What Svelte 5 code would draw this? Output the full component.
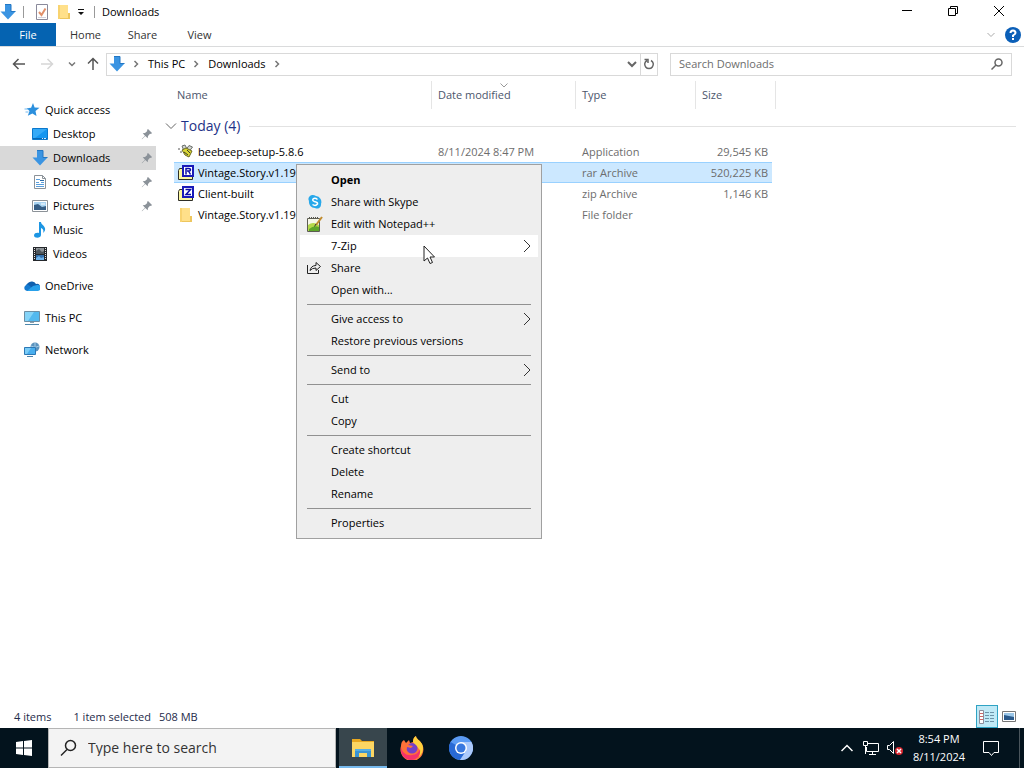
<script>
    const places = [
        { name: 'Desktop', icon: 'desktop', pinned: true },
        { name: 'Downloads', icon: 'down', pinned: true },
        { name: 'Documents', icon: 'document', pinned: true },
        { name: 'Pictures', icon: 'picture', pinned: true },
        { name: 'Music', icon: 'music' },
        { name: 'Videos', icon: 'video' }
    ];

    const roots = [
        { name: 'OneDrive', icon: 'onedrive' },
        { name: 'This PC', icon: 'pc' },
        { name: 'Network', icon: 'network' }
    ];

    const files = [
        { name: 'beebeep-setup-5.8.6', icon: 'bee', date: '8/11/2024 8:47 PM', type: 'Application', size: '29,545 KB' },
        { name: 'Vintage.Story.v1.19', icon: 'rar', date: '', type: 'rar Archive', size: '520,225 KB' },
        { name: 'Client-built', icon: 'zip', date: '', type: 'zip Archive', size: '1,146 KB' },
        { name: 'Vintage.Story.v1.19', icon: 'folder', date: '', type: 'File folder', size: '' }
    ];

    const menu = [
        [
            { label: 'Open', bold: true },
            { label: 'Share with Skype', icon: 'skype' },
            { label: 'Edit with Notepad++', icon: 'notepad' },
            { label: '7-Zip', sub: true },
            { label: 'Share', icon: 'share' },
            { label: 'Open with...' }
        ],
        [{ label: 'Give access to', sub: true }, { label: 'Restore previous versions' }],
        [{ label: 'Send to', sub: true }],
        [{ label: 'Cut' }, { label: 'Copy' }],
        [{ label: 'Create shortcut' }, { label: 'Delete' }, { label: 'Rename' }],
        [{ label: 'Properties' }]
    ];

    let place = $state('Downloads');
    let selected = $state(1);
    let hovered = $state('7-Zip');
    let query = $state('');
    let taskQuery = $state('');
</script>

{#snippet icon(name)}
    <svg class="icon" width="16" height="16" viewBox="0 0 16 16" fill="none" aria-hidden="true">
        {#if name === 'down'}
            <path d="M5 0.5h6v7h4.5L8 15.5 0.5 7.5H5z" fill="#3a94e2" />
            <path d="M5 0.5h6v7h4.5" stroke="#2277c4" />
        {:else if name === 'star'}
            <path d="M9 1l1.6 4.4 4.9.4-4 3.1 1 5.1-4.1-2.6-4.6 2.3 1.7-4.7-2.9-2.8 4.500-.5z" fill="#2b8fdd" />
            <path d="M0.5 7h4M1.5 10h3" stroke="#74b9ee" />
        {:else if name === 'desktop'}
            <path d="M0.5 2.5h15v11h-15z" fill="#1496f0" stroke="#0b78cc" />
            <path d="M1 12.5h14" stroke="#0768b5" />
            <path d="M10 12.5h1M12 12.5h2" stroke="#d5ecff" />
            <path d="M1 3h14L3 12H1z" fill="#35aaf7" />
        {:else if name === 'document'}
            <path d="M2.5 1.5h8l3 3v10h-11z" fill="#fff" stroke="#8b9299" />
            <path d="M10.5 1.5v3h3" stroke="#8b9299" />
            <path d="M4 5.5h4M4 8.5h3M9 8.5h3M4 10.5h8M4 12.5h8" stroke="#5b9fdc" />
            <path d="M8 6.5h4" stroke="#2c6ca8" />
        {:else if name === 'picture'}
            <path d="M0.5 2.5h15v11h-15z" fill="#fff" stroke="#8c9298" />
            <path d="M2 4h12v8H2z" fill="#a9d4f2" />
            <path d="M2 7l4-1 4 3 4-1v4H2z" fill="#365e86" />
            <path d="M9 6h4" stroke="#fff" />
        {:else if name === 'music'}
            <path d="M7 0h2c0 3 5 4 4 8 0 1-1 2-2 3 1-3 0-4-2-5v7c0 3.500-7 3.500-7 .5C2 11 5 10.500 7 11z" fill="#1d96e3" />
        {:else if name === 'video'}
            <path d="M1 1h14v14H1z" fill="#25282c" />
            <path d="M4 2h8v6H4z" fill="#8e9498" />
            <path d="M4 9h8v5H4z" fill="#326fac" />
            <path d="M4 5l3-2 3 3 2-1v3H4z" fill="#4d565c" />
            <path d="M4 12l3-2 2 2 3-1v3H4z" fill="#70b3ea" />
            <path d="M2.5 2v12M13.5 2v12" stroke="#e4e4e4" stroke-dasharray="1 1" />
        {:else if name === 'onedrive'}
            <path d="M4 12a4 4 0 0 1 0-7 5 5 0 0 1 8 1 3 3 0 0 1 2 6z" fill="#0f5fae" />
            <path d="M1 12a3.5 3.5 0 0 1 3-5.5l8 6.5H3z" fill="#1479cf" />
            <path d="M3 13l6-5 4-1a3 3 0 0 1 1 6z" fill="#28a0ea" />
        {:else if name === 'pc'}
            <path d="M0.5 1.5h15v10h-15z" fill="#53b9ef" stroke="#6d8ea3" />
            <path d="M1 2h9L4 11H1z" fill="#85d4f8" />
            <path d="M6 12.5h4" stroke="#8aa0ae" />
            <path d="M1 14.5h14" stroke="#4e87ac" />
        {:else if name === 'network'}
            <circle cx="11" cy="5" r="4.5" fill="#5c93bd" />
            <path d="M7 4q4 3 8 0M11 1v8" stroke="#a5cce7" />
            <path d="M0.5 5.5h11v7h-11z" fill="#48aeee" stroke="#2c78b5" />
            <path d="M1 6h6l-4 6H1z" fill="#7accf7" />
            <path d="M3 14.5h6" stroke="#4c82aa" />
        {:else if name === 'bee'}
            <path d="M4 2l3-1 2 4-3 2zM14.5 3L11 1.500 8.500 5l3 2z" fill="#d3d6d2" stroke="#6b706c" />
            <path d="M4 6l4-2 6 3-3 6-4-2z" fill="#d8d635" stroke="#6c6a22" />
            <path d="M6 8l4 3M9 6l3 3" stroke="#3b3b2b" />
            <path d="M0 5h2M2 8h2" stroke="#555" />
        {:else if name === 'rar' || name === 'zip'}
            <path d="M0.5 5.5l1-2h3l1 1h9v10h-14z" fill="#fbf7a0" stroke="#2e2e27" />
            <path d="M5 1h10v10H5z" fill="#fff" stroke="#1a1ab8" stroke-width="2" />
            {#if name === 'rar'}
                <path d="M8 9.5v-6h3q1.500 0 1.500 1.200T11 6H9M10.500 6l2 3.500" stroke="#0b0ba8" stroke-width="1.5" />
            {:else}
                <path d="M7.5 3.500h5L8 8.500h5" stroke="#0b0ba8" stroke-width="1.5" />
            {/if}
        {:else if name === 'folder'}
            <path d="M2 1h10v14H2z" fill="#ffe08a" />
            <path d="M12 9h2v6H3v-1h9z" fill="#edc65e" />
            <path d="M2 1h2v14H2z" fill="#f8d370" />
        {:else if name === 'properties'}
            <path d="M2.5 0.5h11v15h-11z" fill="#fff" stroke="#8a8a9b" />
            <path d="M5 8l2.5 3 4-6.5" stroke="#e0906a" stroke-width="2" />
            <path d="M4 13.5h8" stroke="#d2d2dc" />
        {:else if name === 'skype'}
            <path d="M5 1a6 6 0 0 1 4 1 6 6 0 0 1 5 8 4 4 0 0 1-6 4 6 6 0 0 1-6-7A4 4 0 0 1 5 1z" fill="#28a8ea" />
            <path d="M10.5 5.5Q8 3.500 6 5q-1 2 2 2.700t2.500 2.400q-2 2.400-5 .4" stroke="#fff" stroke-width="1.5" />
        {:else if name === 'notepad'}
            <path d="M0.5 2.5h12v13h-12z" fill="#f6f7e8" stroke="#5c5c52" />
            <path d="M1 9q5-4 11 0v6H1z" fill="#b4d84a" />
            <path d="M2 13q5-4 10-2v4H2z" fill="#5ea62a" />
            <path d="M2 1.5h10" stroke="#55554e" stroke-dasharray="1 1" />
            <path d="M15 1L9 9" stroke="#c08b2e" stroke-width="2" />
            <path d="M9 8l-1.500 2.500" stroke="#333" />
        {:else if name === 'share'}
            <path d="M0.5 5v8.5h11V10" stroke="#222" />
            <path d="M3 10.5q1-5 6-5v-3l4.5 4-4.5 4V8Q5 8 3 10.5z" stroke="#222" />
        {/if}
    </svg>
{/snippet}

{#snippet chevron(dir)}
    <svg class="icon" width="8" height="8" viewBox="0 0 8 8" fill="none" stroke="#777" stroke-width="1.5" aria-hidden="true">
        <path d={dir === 'down' ? 'M1 2.5l3 3 3-3' : 'M2.5 1l3 3-3 3'} />
    </svg>
{/snippet}

<div class="screen">
    <header class="titlebar">
        {@render icon('down')}
        <span class="divider"></span>
        <button class="quick" aria-label="Properties">{@render icon('properties')}</button>
        <button class="quick" aria-label="New folder">{@render icon('folder')}</button>
        <button class="quick-more" aria-label="Customize toolbar">
            <svg width="8" height="8" viewBox="0 0 8 8"><path d="M1 1h6v1H1zM1 4h6L4 7z" fill="#111" /></svg>
        </button>
        <span class="divider"></span>
        <h1>Downloads</h1>
        <div class="controls">
            <button aria-label="Minimize">
                <svg width="12" height="12" viewBox="0 0 12 12"><path d="M1 5.5h10" stroke="#000" /></svg>
            </button>
            <button aria-label="Restore">
                <svg width="12" height="12" viewBox="0 0 12 12" fill="none" stroke="#000"><path d="M1.5 3.5h7v7h-7zM3.5 3V1.5h7v7H9" /></svg>
            </button>
            <button aria-label="Close">
                <svg width="12" height="12" viewBox="0 0 12 12" stroke="#000"><path d="M1 1l10 10M11 1L1 11" /></svg>
            </button>
        </div>
    </header>

    <nav class="ribbon" aria-label="Ribbon">
        <button class="file">File</button>
        <button>Home</button>
        <button>Share</button>
        <button>View</button>
        <div class="ribbon-end">
            <button class="plain" aria-label="Expand ribbon">
                <svg class="icon" width="8" height="8" viewBox="0 0 8 8" fill="none" stroke="#aaa"><path d="M0.5 2L4 5.5 7.5 2" /></svg>
            </button>
            <button class="plain" aria-label="Help">
                <svg class="icon" width="16" height="16" viewBox="0 0 16 16" fill="none">
                    <circle cx="8" cy="8" r="8" fill="#0b5fb8" />
                    <path d="M5.5 6q0-2.500 2.500-2.500T10.500 6q0 1-2.500 2.500V10" stroke="#fff" stroke-width="2" />
                    <path d="M7 11h2v2H7z" fill="#fff" />
                </svg>
            </button>
        </div>
    </nav>

    <div class="toolbar">
        <div class="history">
            <button class="plain" aria-label="Back">
                <svg class="icon" width="14" height="14" viewBox="0 0 14 14" fill="none" stroke="#555" stroke-width="1.5"><path d="M13 7H2M6.5 2l-5 5 5 5" /></svg>
            </button>
            <button class="plain" aria-label="Forward">
                <svg class="icon" width="14" height="14" viewBox="0 0 14 14" fill="none" stroke="#d6d6d6" stroke-width="1.5"><path d="M1 7h11M7.5 2l5 5-5 5" /></svg>
            </button>
            <button class="plain" aria-label="Recent locations">{@render chevron('down')}</button>
            <button class="plain" aria-label="Up">
                <svg class="icon" width="14" height="14" viewBox="0 0 14 14" fill="none" stroke="#555" stroke-width="1.5"><path d="M7 13V2M2 6.5l5-5 5 5" /></svg>
            </button>
        </div>
        <div class="address">
            {@render icon('down')}
            <span class="sep">{@render chevron('right')}</span>
            <button class="plain">This PC</button>
            <span class="sep">{@render chevron('right')}</span>
            <button class="plain">Downloads</button>
            <span class="sep">{@render chevron('right')}</span>
            <button class="plain drop" aria-label="Previous locations">
                <svg class="icon" width="10" height="8" viewBox="0 0 10 8" fill="none" stroke="#666" stroke-width="2"><path d="M1 2l4 4 4-4" /></svg>
            </button>
            <button class="plain refresh" aria-label="Refresh">
                <svg class="icon" width="12" height="12" viewBox="0 0 12 12" fill="none" stroke="#666" stroke-width="1.5"><path d="M8 2.500A4.300 4.300 0 1 1 4 2.500M1.500 1.500H5V5" /></svg>
            </button>
        </div>
        <label class="search">
            <input type="text" placeholder="Search Downloads" aria-label="Search Downloads" bind:value={query} />
            <svg class="icon" width="12" height="12" viewBox="0 0 12 12" fill="none" stroke="#666" stroke-width="1.5"><circle cx="7.5" cy="4.5" r="3.5" /><path d="M5 7L0.5 11.5" /></svg>
        </label>
    </div>

    <main>
        <nav class="tree" aria-label="Folders">
            <button class="root">{@render icon('star')}Quick access</button>
            {#each places as item}
                <button class="child" class:active={place === item.name} onclick={() => (place = item.name)}>
                    {@render icon(item.icon)}
                    <span>{item.name}</span>
                    {#if item.pinned}
                        <svg class="icon pin" width="12" height="12" viewBox="0 0 12 12"><path d="M7 1l4 4-1 1-1-.3L7 8l-.3 2.300L4.300 8 1 11.300.700 11 4 7.700 1.700 5.300 4 5l2.300-2L6 2z" fill="#8b9299" /></svg>
                    {/if}
                </button>
            {/each}
            {#each roots as item}
                <button class="root spaced">{@render icon(item.icon)}{item.name}</button>
            {/each}
        </nav>

        <section class="content">
            <table>
                <colgroup>
                    <col class="name" /><col class="date" /><col class="type" /><col class="size" /><col class="edge" /><col />
                </colgroup>
                <thead>
                    <tr>
                        <th>Name</th>
                        <th class="sorted">
                            Date modified
                            <svg width="8" height="5" viewBox="0 0 8 5" fill="none" stroke="#999"><path d="M0.5 0.5L4 4l3.5-3.5" /></svg>
                        </th>
                        <th>Type</th>
                        <th colspan="2">Size</th>
                        <td></td>
                    </tr>
                </thead>
                <tbody>
                    <tr>
                        <th class="group" colspan="6">
                            <div>
                                <svg class="icon" width="12" height="8" viewBox="0 0 12 8" fill="none" stroke="#666"><path d="M1 1.5l5 5 5-5" /></svg>
                                Today (4)
                            </div>
                        </th>
                    </tr>
                    {#each files as file, index}
                        <tr class:selected={selected === index} onclick={() => (selected = index)}>
                            <td class="filename"><div>{@render icon(file.icon)}{file.name}</div></td>
                            <td>{file.date}</td>
                            <td>{file.type}</td>
                            <td class="number">{file.size}</td>
                        </tr>
                    {/each}
                </tbody>
            </table>
        </section>
    </main>

    <footer class="status">
        <span class="count">4 items</span>
        <span>1 item selected</span>
        <span>508 MB</span>
        <div class="views">
            <button class="on" aria-label="Details view">
                <svg class="icon" width="16" height="16" viewBox="0 0 16 16" fill="none">
                    <path d="M0.5 1.5h4v13h-4z" fill="#fff" stroke="#8d8d9c" />
                    <path d="M1 4.5h3M1 7.5h3M1 10.5h3" stroke="#c66" />
                    <path d="M6 3.5h4M6 6.5h4M6 9.5h4M6 12.5h4M11 3.5h4M11 6.5h4M11 9.5h4M11 12.5h4" stroke="#6d93a8" />
                </svg>
            </button>
            <button aria-label="Thumbnail view">
                <svg class="icon" width="14" height="12" viewBox="0 0 14 12" fill="none">
                    <path d="M0.5 0.5h13v10h-13z" fill="#fff" stroke="#777" />
                    <path d="M2 2h10v7H2z" fill="#9ac6e8" />
                    <path d="M2 4l5 1 5 1v3H2z" fill="#29588a" />
                </svg>
            </button>
        </div>
    </footer>

    <div class="taskbar">
        <button class="start" aria-label="Start">
            <svg class="icon" width="16" height="16" viewBox="0 0 16 16" fill="#fff"><path d="M0 2l7-1v6.5H0zM8 1l8-1v7.5H8zM0 8.5h7V15l-7-1zM8 8.5h8V16l-8-1z" /></svg>
        </button>
        <label class="task-search">
            <svg class="icon" width="18" height="18" viewBox="0 0 18 18" fill="none" stroke="#222" stroke-width="1.5"><circle cx="10.5" cy="6.5" r="5" /><path d="M7 10.500L1 16.500" /></svg>
            <input type="text" placeholder="Type here to search" aria-label="Type here to search" bind:value={taskQuery} />
        </label>
        <div class="apps">
            <button class="running" aria-label="File Explorer">
                <svg class="icon" width="24" height="24" viewBox="0 0 24 24">
                    <path d="M1 3h8l2 2h12v3H1z" fill="#e9a820" />
                    <path d="M1 6h22v15H1z" fill="#fcd663" />
                    <path d="M4 21v-8h16v8h-4v-4H8v4z" fill="#3b94d3" />
                    <path d="M4 13h16v2H4z" fill="#56aee4" />
                </svg>
            </button>
            <button aria-label="Firefox">
                <svg class="icon" width="24" height="24" viewBox="0 0 24 24">
                    <path d="M4 4l2 3 3-3 1 3 3-1c0-3 1-5 3-6 0 3 4 4 6 8a11.5 11.5 0 1 1-21 2c0-3 1-5 3-6z" fill="#ff7139" />
                    <path d="M13 6c0-3 1-5 3-6 0 3 4 4 6 8 2 4 1 9-3 13 2-6 0-9-3-11z" fill="#ffd23d" />
                    <path d="M1 11c1 6 6 9 11 8 4 0 7-3 8-6 1 6-3 11-9 11S0 19 1 11z" fill="#f5326c" />
                    <path d="M8 9q4-4 8 0 3 3 0 7-4 3-8 0-2-2-1-5l4 1 2-2z" fill="#7541c8" />
                </svg>
            </button>
            <button aria-label="Chromium">
                <svg class="icon" width="24" height="24" viewBox="0 0 24 24">
                    <circle cx="12" cy="12" r="12" fill="#5b9bf4" />
                    <path d="M12 12L1.6 6A12 12 0 0 0 11 24l6-9z" fill="#2869d5" />
                    <path d="M12 6h10.4A12 12 0 0 1 11 24l6-9z" fill="#abc9fb" />
                    <circle cx="12" cy="12" r="6" fill="#fff" />
                    <circle cx="12" cy="12" r="4.5" fill="#3978df" />
                </svg>
            </button>
        </div>
        <div class="tray">
            <button aria-label="Show hidden icons">
                <svg class="icon" width="12" height="8" viewBox="0 0 12 8" fill="none" stroke="#fff" stroke-width="1.5"><path d="M0.5 7L6 1.5 11.5 7" /></svg>
            </button>
            <button aria-label="Network">
                <svg class="icon" width="16" height="14" viewBox="0 0 16 14" fill="none" stroke="#fff"><path d="M5 2.5h10.5v8H3.5V6M6 13.5h7M9.5 11v2M0.5 0.5h4v4h-4zM2.5 5v8" /></svg>
            </button>
            <button aria-label="Volume muted">
                <svg class="icon" width="16" height="16" viewBox="0 0 16 16" fill="none">
                    <path d="M0.5 5.5h2l4-4v12l-4-4h-2z" stroke="#fff" />
                    <circle cx="12" cy="11" r="4" fill="#d8262f" />
                    <path d="M10 9l4 4M14 9l-4 4" stroke="#fff" stroke-width="1.5" />
                </svg>
            </button>
        </div>
        <button class="clock"><span>8:54 PM</span><span>8/11/2024</span></button>
        <button class="notify" aria-label="Notifications">
            <svg class="icon" width="16" height="16" viewBox="0 0 16 16" fill="none" stroke="#fff"><path d="M0.5 1.5h15v11H11l-2.5 3-2.5-3H0.5z" /></svg>
        </button>
    </div>

    <div class="menu" role="menu">
        {#each menu as group}
            <div class="menu-group" role="group">
                {#each group as item}
                    <button role="menuitem" class:bold={item.bold} class:hovered={hovered === item.label} onmouseenter={() => (hovered = item.label)}>
                        <span class="slot">{#if item.icon}{@render icon(item.icon)}{/if}</span>
                        <span>{item.label}</span>
                        {#if item.sub}
                            <svg class="icon arrow" width="8" height="14" viewBox="0 0 8 14" fill="none" stroke="#333"><path d="M1 1l6 6-6 6" /></svg>
                        {/if}
                    </button>
                {/each}
            </div>
        {/each}
    </div>

    <svg class="cursor" width="13" height="20" viewBox="0 0 13 20" aria-hidden="true">
        <path d="M1 1v15l3.5-3L7 18.500l2.500-1L7 12h4.500z" fill="#fff" stroke="#222" />
    </svg>
</div>

<style>
    :global(body) {
        margin: 0;
        background: #fff;
    }

    .screen {
        position: relative;
        display: flex;
        flex-direction: column;
        min-height: 100vh;
        color: #000;
        background: #fff;
        font-family: "Open Sans", "Noto Sans", sans-serif;
        font-size: 11px;
        line-height: 16px;
    }

    button, input {
        margin: 0;
        padding: 0;
        border: 0;
        border-radius: 0;
        background: none;
        color: inherit;
        font: inherit;
    }

    .icon {
        display: block;
        flex: none;
    }

    .titlebar {
        display: flex;
        align-items: center;
        height: 23px;
    }

    .divider {
        width: 1px;
        height: 12px;
        margin: 0 7px;
        background: #999;
    }

    .quick {
        width: 22px;
        padding: 0 3px;
    }

    .quick-more {
        width: 12px;
        line-height: 8px;
    }

    h1 {
        margin: 0;
        font-size: 11px;
        font-weight: 400;
    }

    .controls {
        display: flex;
        margin-left: auto;
        padding-right: 2px;
    }

    .controls button {
        width: 46px;
        height: 22px;
        line-height: 12px;
    }

    .ribbon {
        display: flex;
        height: 23px;
        border-bottom: 1px solid #dadbdc;
        color: #333;
    }

    .ribbon > button {
        width: 57px;
    }

    .ribbon .file {
        width: 56px;
        margin-right: 1px;
        background: #0563b1;
        color: #fff;
    }

    .ribbon-end {
        display: flex;
        align-items: center;
        gap: 10px;
        margin-left: auto;
        padding-right: 3px;
    }

    .toolbar {
        display: flex;
        align-items: center;
        height: 34px;
        padding-right: 12px;
    }

    .history {
        display: flex;
        align-items: center;
        gap: 14px;
        width: 94px;
        padding-left: 12px;
    }

    .history button:nth-child(4) {
        margin-left: -4px;
    }

    .address, .search {
        display: flex;
        align-items: center;
        box-sizing: border-box;
        height: 23px;
        border: 1px solid #d9d9d9;
    }

    .address {
        flex: 1;
        padding-left: 2px;
    }

    .sep {
        padding: 0 8px 0 7px;
    }

    .drop {
        margin-left: auto;
        padding: 0 3px;
    }

    .refresh {
        align-self: stretch;
        padding: 0 2px;
        border-left: 1px solid #d9d9d9;
    }

    .search {
        flex: 0 1 342px;
        margin-left: 12px;
        padding: 0 8px;
    }

    input {
        flex: 1;
        min-width: 0;
        outline: none;
    }

    .search input::placeholder {
        color: #6d6d6d;
        opacity: 1;
    }

    main {
        display: flex;
        flex: 1;
    }

    .tree {
        width: 156px;
        padding-top: 17px;
    }

    .tree button {
        display: flex;
        align-items: center;
        gap: 5px;
        width: 100%;
        height: 24px;
        padding-left: 24px;
        text-align: left;
    }

    .tree .child {
        padding-left: 32px;
    }

    .tree .spaced {
        margin-top: 8px;
    }

    .tree .active {
        background: #d9d9d9;
    }

    .pin {
        margin-left: auto;
        margin-right: 3px;
    }

    .content {
        flex: 1;
        padding: 0 8px 0 18px;
    }

    table {
        width: 100%;
        table-layout: fixed;
        border-spacing: 0;
        color: #6d6d6d;
    }

    .name { width: 258px; }
    .date { width: 144px; }
    .type { width: 120px; }
    .size { width: 76px; }
    .edge { width: 4px; }

    th {
        position: relative;
        height: 28px;
        padding: 0 0 0 6px;
        font-weight: 400;
        text-align: left;
        color: #4c566c;
    }

    thead th {
        border-right: 1px solid #e5e5e5;
    }

    thead th:first-child {
        padding-left: 3px;
    }

    .sorted svg {
        position: absolute;
        top: 2px;
        left: 68px;
    }

    tbody .group {
        height: 30px;
        padding: 2px 0 0;
        font-size: 14px;
        line-height: 20px;
        color: #1e3287;
    }

    .group div {
        display: flex;
        align-items: center;
        gap: 4px;
        margin-left: -9px;
    }

    .group div::after {
        content: "";
        flex: 1;
        height: 1px;
        margin-left: 5px;
        background: #e2e2e2;
    }

    tbody td {
        height: 19px;
        padding: 0 0 0 6px;
        border: 0 solid transparent;
        border-width: 1px 0;
        line-height: 16px;
        white-space: nowrap;
    }

    tbody .filename {
        padding-left: 4px;
        color: #000;
    }

    .filename div {
        display: flex;
        align-items: center;
        gap: 4px;
    }

    tbody .number {
        padding: 0 4px 0 0;
        text-align: right;
    }

    .selected td {
        background: #cce8ff;
        border-color: #99d1ff;
    }

    .status {
        display: flex;
        align-items: center;
        gap: 8px;
        height: 23px;
        padding-left: 14px;
        color: #1e2b4a;
    }

    .count {
        padding-right: 14px;
    }

    .views {
        display: flex;
        align-self: stretch;
        margin-left: auto;
        padding-right: 4px;
    }

    .views button {
        display: grid;
        place-items: center;
        width: 22px;
    }

    .views .on {
        background: #bfe9f6;
        border: 1px solid #2fa3c4;
    }

    .taskbar {
        display: flex;
        height: 40px;
        background: #03131d;
        color: #fff;
    }

    .taskbar button {
        display: grid;
        place-items: center;
    }

    .start {
        width: 48px;
    }

    .task-search {
        display: flex;
        align-items: center;
        gap: 10px;
        box-sizing: border-box;
        width: 288px;
        padding-left: 11px;
        border: 1px solid #b5b5b5;
        background: #f3f3f3;
        color: #333;
        font-size: 14px;
    }

    .task-search input::placeholder {
        color: #333;
        opacity: 1;
    }

    .apps {
        display: flex;
        gap: 1px;
        padding-left: 3px;
    }

    .apps button {
        width: 48px;
    }

    .apps .running {
        background: #38464d;
        box-shadow: inset 0 -2px #76b9ed;
    }

    .tray {
        display: flex;
        margin-left: auto;
    }

    .tray button {
        width: 24px;
    }

    .taskbar .clock {
        align-content: center;
        width: 58px;
        margin-left: 3px;
        line-height: 18px;
    }

    .taskbar .notify {
        width: 52px;
        margin-right: 4px;
        padding-right: 5px;
        border-right: 1px solid #4a555c;
    }

    .menu {
        position: absolute;
        top: 164px;
        left: 296px;
        box-sizing: border-box;
        width: 246px;
        padding: 4px 3px;
        border: 1px solid #a0a0a0;
        background: #eee;
        color: #000;
    }

    .menu-group + .menu-group::before {
        content: "";
        display: block;
        height: 1px;
        margin: 3px 7px;
        background: #919191;
    }

    .menu button {
        display: flex;
        align-items: center;
        width: 100%;
        height: 22px;
        padding-left: 7px;
        text-align: left;
    }

    .menu .hovered {
        background: #fff;
    }

    .menu .bold {
        font-weight: 700;
    }

    .slot {
        width: 24px;
    }

    .arrow {
        margin-left: auto;
        margin-right: 7px;
    }

    .cursor {
        position: absolute;
        top: 245px;
        left: 423px;
        pointer-events: none;
    }
</style>
